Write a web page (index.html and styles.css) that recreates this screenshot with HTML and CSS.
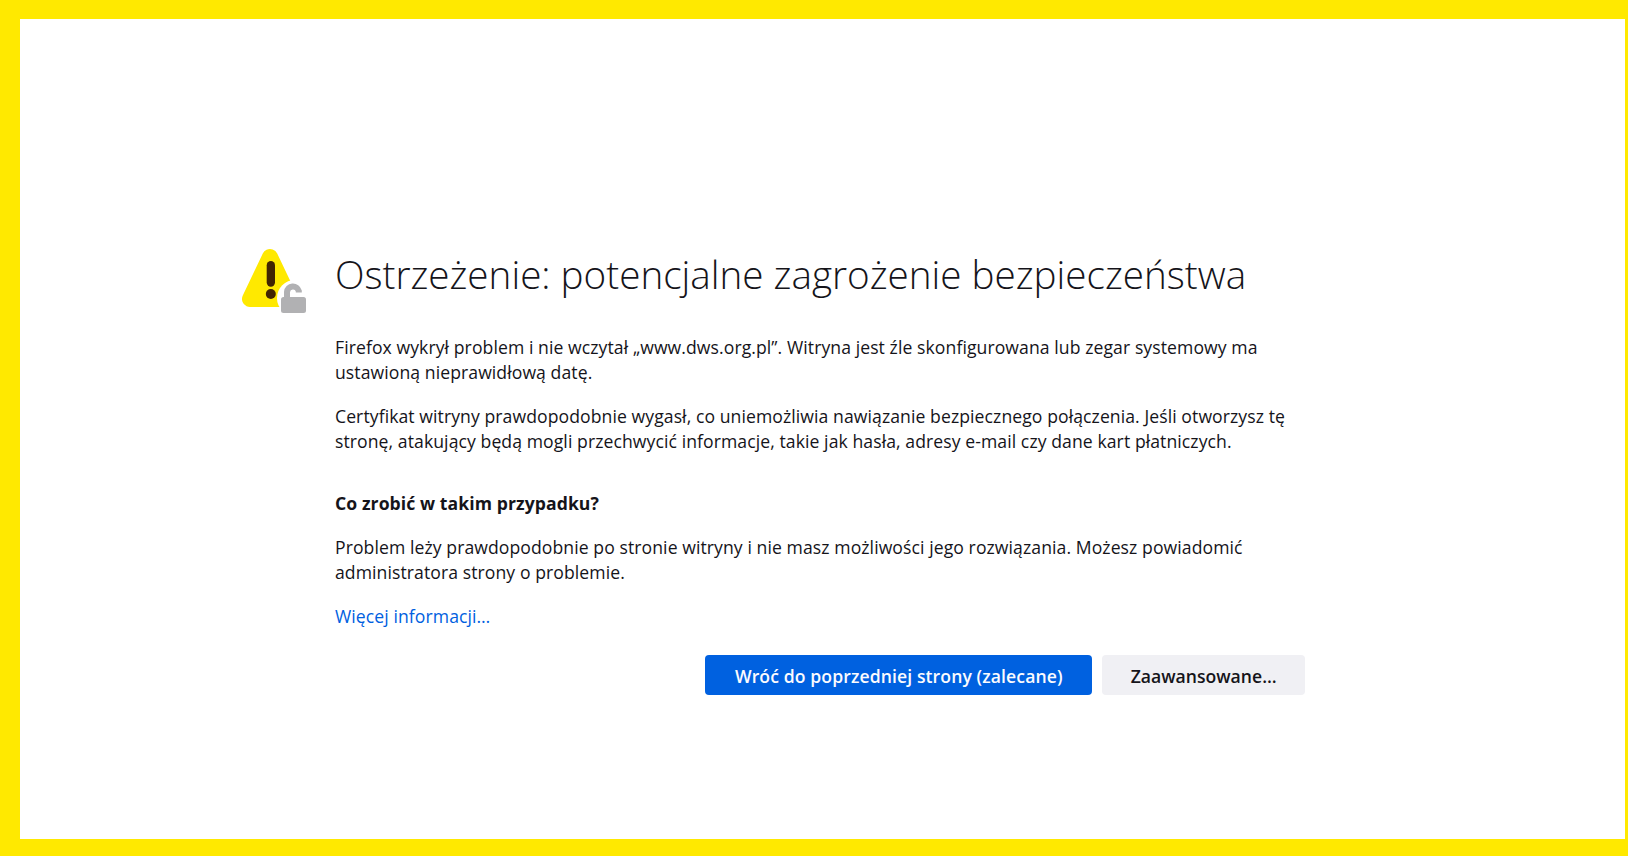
FILE: index.html
```html
<!DOCTYPE html>
<html lang="pl">
<head>
<meta charset="utf-8">
<title>Ostrzeżenie: potencjalne zagrożenie bezpieczeństwa</title>
<link rel="stylesheet" href="styles.css">
</head>
<body>
<main class="frame">
  <div class="container">
    <div class="icon-col">
      <svg class="warn" width="70" height="70" viewBox="0 0 70 70" aria-hidden="true">
        <path d="M30 12L10 54H50Z" fill="#ffe900" stroke="#ffe900" stroke-width="16" stroke-linejoin="round"/>
        <rect x="26.700" y="16" width="8.300" height="25.700" rx="4.150" fill="#412402"/>
        <circle cx="30.800" cy="49" r="5" fill="#412402"/>
        <circle cx="55" cy="53" r="18" fill="#fff"/>
        <path d="M47 54V47A6 6 0 0 1 58.800 46V47.500" fill="none" stroke="#b1b1b3" stroke-width="6"/>
        <rect x="41" y="52" width="25" height="16" rx="2.500" fill="#b1b1b3"/>
      </svg>
    </div>
    <div class="content">
      <h1 class="title">Ostrzeżenie: potencjalne zagrożenie bezpieczeństwa</h1>
      <p class="para">Firefox wykrył problem i nie wczytał „www.dws.org.pl”. Witryna jest źle skonfigurowana lub zegar systemowy ma<br>ustawioną nieprawidłową datę.</p>
      <p class="para">Certyfikat witryny prawdopodobnie wygasł, co uniemożliwia nawiązanie bezpiecznego połączenia. Jeśli otworzysz tę<br>stronę, atakujący będą mogli przechwycić informacje, takie jak hasła, adresy e-mail czy dane kart płatniczych.</p>
      <h2 class="subtitle">Co zrobić w takim przypadku?</h2>
      <p class="para">Problem leży prawdopodobnie po stronie witryny i nie masz możliwości jego rozwiązania. Możesz powiadomić<br>administratora strony o problemie.</p>
      <p class="para"><a class="link" href="#">Więcej informacji…</a></p>
      <div class="buttons">
        <button class="btn primary">Wróć do poprzedniej strony (zalecane)</button>
        <button class="btn secondary">Zaawansowane…</button>
      </div>
    </div>
  </div>
</main>
</body>
</html>
```
FILE: styles.css
```css
* { box-sizing: border-box; }
html, body { margin: 0; height: 100%; }
body { background: #ffe900; font-family: "Open Sans", "Noto Sans", sans-serif; color: #15141a; }
.frame { position: fixed; inset: 0; background: #fff; border-style: solid; border-color: #ffe900; border-width: 19px 3px 17px 20px; padding: 231px 0 0 221px; }
.container { display: flex; width: 1100px; }
.icon-col { width: 94px; flex: none; }
.warn { display: block; margin-left: -1px; margin-top: -5px; overflow: visible; }
.content { width: 970px; }
.title { margin: 0; font-size: 38.65px; font-weight: 300; line-height: 49px; white-space: nowrap; }
.para { margin: 19px 0 0; font-size: 17.6px; letter-spacing: 0.08px; line-height: 25px; white-space: nowrap; }
.title + .para { margin-top: 36px; }
.subtitle { margin: 37px 0 0; font-size: 17.6px; letter-spacing: 0.08px; font-weight: 700; line-height: 25px; }
.link { color: #0060df; text-decoration: none; }
.buttons { display: flex; justify-content: flex-end; gap: 10px; margin-top: 26px; }
.btn { height: 40px; border: 0; border-radius: 4px; font-family: inherit; font-size: 17.6px; font-weight: 600; padding: 1px 28.5px 0; }
.primary { background: #0061e0; color: #fbfbfe; letter-spacing: 0.1px; padding: 1px 29.5px 0; }
.secondary { background: #f0f0f4; color: #15141a; }
```
